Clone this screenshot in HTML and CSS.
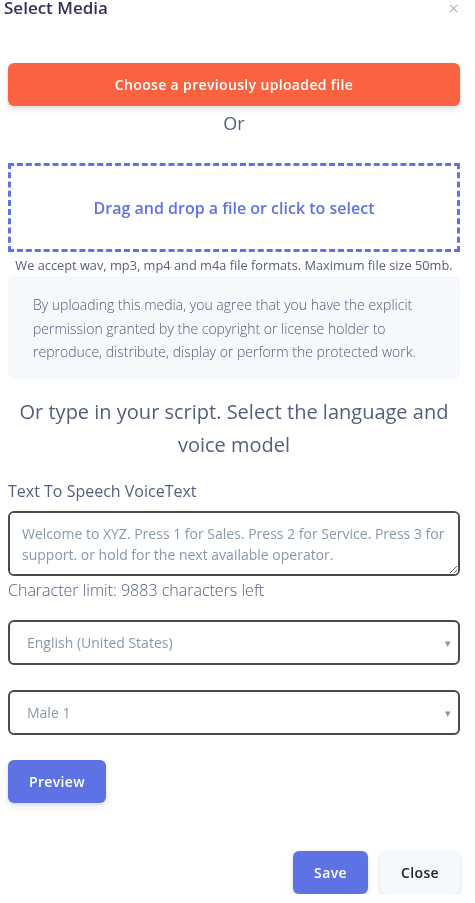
FILE: index.html
```html
<!DOCTYPE html>
<html>
<head>
<meta charset="utf-8">
<link rel="stylesheet" href="styles.css">
</head>
<body>
<div class="modal">
  <div class="modal-header">
    <h5 class="modal-title">Select Media</h5>
    <span class="close">&times;</span>
  </div>
  <div class="modal-body">
    <button class="btn btn-warning btn-block">Choose a previously uploaded file</button>
    <div class="or">Or</div>
    <div class="dropzone">Drag and drop a file or click to select</div>
    <div class="accept">We accept wav, mp3, mp4 and m4a file formats. Maximum file size 50mb.</div>
    <div class="notice">By uploading this media, you agree that you have the explicit permission granted by the copyright or license holder to reproduce, distribute, display or perform the protected work.</div>
    <h3 class="script-heading">Or type in your script. Select the language and voice model</h3>
    <label class="label">Text To Speech VoiceText</label>
    <textarea class="textarea" placeholder="Welcome to XYZ. Press 1 for Sales. Press 2 for Service. Press 3 for support. or hold for the next available operator."></textarea>
    <div class="limit">Character limit: 9883 characters left</div>
    <div class="select"><span>English (United States)</span><span class="caret">&#9662;</span></div>
    <div class="select"><span>Male 1</span><span class="caret">&#9662;</span></div>
    <button class="btn btn-primary btn-preview">Preview</button>
  </div>
  <div class="modal-footer">
    <button class="btn btn-primary">Save</button>
    <button class="btn btn-light">Close</button>
  </div>
</div>
</body>
</html>
```
FILE: styles.css
```css
* { box-sizing: border-box; }
html, body { margin: 0; padding: 0; background: #fff; }
body {
  font-family: "Open Sans", "Noto Sans", sans-serif;
  color: #525f7f;
  width: 475px;
}
.modal { padding: 0 15px 0 8px; }
.modal-header {
  display: flex;
  justify-content: space-between;
  align-items: flex-start;
  margin-top: -5px;
}
.modal-title {
  margin: 0 0 0 -4px;
  font-size: 17px;
  font-weight: 600;
  color: #32325d;
  line-height: 26px;
}
.close {
  color: #bbb;
  font-size: 19px;
  line-height: 26px;
  margin-right: 1px;
  margin-top: 0;
}
.modal-body {
  padding-top: 42px;
}
.btn {
  font-family: "Open Sans", "Noto Sans", sans-serif;
  font-size: 14px;
  font-weight: 600;
  border: none;
  border-radius: 6px;
  padding: 0 24px;
  height: 43px;
  color: #fff;
  letter-spacing: .025em;
  box-shadow: 0 4px 6px rgba(50,50,93,.11), 0 1px 3px rgba(0,0,0,.08);
}
.btn-block { width: 100%; display: block; }
.btn-warning { background: #fb6340; }
.btn-primary { background: #5e72e4; }
.btn-light { background: #f6f9fc; color: #212529; }
.or {
  text-align: center;
  font-size: 18px;
  line-height: 24px;
  margin-top: 5px;
}
.dropzone {
  margin-top: 28px;
  height: 89px;
  border: 3px dashed #5e72e4;
  display: flex;
  align-items: center;
  justify-content: center;
  color: #5e72e4;
  font-weight: 600;
  font-size: 16px;
}
.accept {
  text-align: center;
  font-size: 12.8px;
  line-height: 16px;
  margin-top: 5px;
}
.notice {
  margin-top: 3px;
  background: #f6f9fc;
  border-radius: 6px;
  padding: 17px 24px 15px 25px;
  font-size: 14px;
  font-weight: 300;
  line-height: 23.6px;
  color: #4f5b78;
}
.script-heading {
  margin: 16px 0 0;
  text-align: center;
  font-size: 20px;
  font-weight: 400;
  line-height: 33px;
}
.label {
  display: block;
  margin-top: 18px;
  font-size: 16px;
  line-height: 24px;
}
.textarea {
  display: block;
  width: 100%;
  margin-top: 8px;
  height: 65px;
  border: 2px solid #4a4a4a;
  border-radius: 6px;
  padding: 10px 12px;
  font-family: "Open Sans", "Noto Sans", sans-serif;
  font-size: 14px;
  line-height: 21px;
  color: #525f7f;
  resize: vertical;
}
.textarea::placeholder { color: #8898aa; }
.limit {
  font-size: 16px;
  font-weight: 300;
  line-height: 24px;
  margin-top: 2px;
  color: #525f7f;
}
.select {
  margin-top: 18px;
  height: 45px;
  border: 2px solid #4a4a4a;
  border-radius: 6px;
  display: flex;
  align-items: center;
  justify-content: space-between;
  padding: 0 7px 0 17px;
  font-size: 14px;
  color: #8898aa;
}
.select + .select { margin-top: 25px; }
.caret { font-size: 11px; color: #8898aa; }
.btn-preview {
  margin-top: 25px;
  display: block;
  padding: 0 20px;
  width: 98px;
}
.modal-footer {
  display: flex;
  justify-content: flex-end;
  gap: 12px;
  margin-top: 48px;
}
.modal-footer .btn { width: 75px; padding: 0; }
.modal-footer .btn-light { width: 80px; }
```
